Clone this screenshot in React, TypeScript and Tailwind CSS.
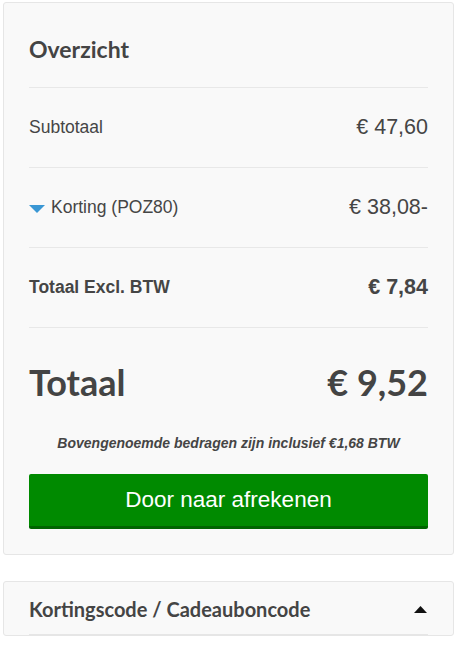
export default function App() {
  return (
    <main className="min-h-screen bg-white pl-[3px] pt-[2px] font-['Liberation_Sans',Arial,sans-serif] text-[#454545]">
      {/* summary card */}
      <section className="w-[451px] rounded-[3px] border border-[#e6e6e6] bg-[#f9f9f9] px-[25px] pb-[25px] pt-[26px]">
        <h2 className="pb-[18px] font-['Lato',sans-serif] text-[23px] font-bold leading-[40px] text-[#444]">
          Overzicht
        </h2>

        <div className="flex h-[80px] items-center justify-between border-t border-[#e8e8e8]">
          <span className="text-[17.5px]">Subtotaal</span>
          <span className="text-[21.5px]">€ 47,60</span>
        </div>

        <div className="flex h-[80px] items-center justify-between border-t border-[#e8e8e8]">
          <span className="flex items-center gap-[6px] text-[17.5px]">
            <svg width="16" height="8" viewBox="0 0 16 8" className="mt-[3px]">
              <polygon points="0,0 16,0 8,8" fill="#3a97d4" />
            </svg>
            Korting (POZ80)
          </span>
          <span className="text-[21.5px]">€ 38,08-</span>
        </div>

        <div className="flex h-[80px] items-center justify-between border-t border-[#e8e8e8]">
          <span className="text-[17.5px] font-bold">Totaal Excl. BTW</span>
          <span className="text-[21.5px] font-bold">€ 7,84</span>
        </div>

        <div className="flex items-center justify-between border-t border-[#e8e8e8] pt-[34px] font-['Lato',sans-serif] text-[36px] font-bold leading-[40px] text-[#444]">
          <span>Totaal</span>
          <span>€ 9,52</span>
        </div>

        <p className="mt-[31px] text-center text-[14px] font-bold italic leading-[20px]">
          Bovengenoemde bedragen zijn inclusief €1,68 BTW
        </p>

        <button className="mt-[21px] flex h-[55px] w-full items-center justify-center rounded-[2px] border-b-[3px] border-[#006400] bg-[#008a00] text-[22.5px] text-white">
          Door naar afrekenen
        </button>
      </section>

      {/* coupon card */}
      <section className="mt-[26px] w-[451px] rounded-[3px] border border-[#e6e6e6] bg-[#f9f9f9] px-[25px]">
        <div className="flex h-[53px] items-center justify-between border-b border-[#e6e6e6] pt-[2px]">
          <h3 className="font-['Lato',sans-serif] text-[20px] font-bold text-[#444]">
            Kortingscode / Cadeauboncode
          </h3>
          <svg width="13" height="7" viewBox="0 0 13 7" className="mr-[1px]">
            <polygon points="0,7 13,7 6.5,0" fill="#111" />
          </svg>
        </div>
      </section>
    </main>
  );
}
